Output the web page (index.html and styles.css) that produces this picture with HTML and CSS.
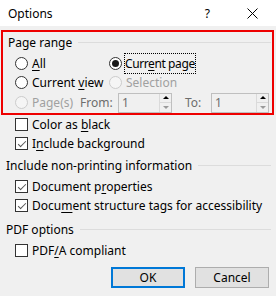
FILE: index.html
```html
<!DOCTYPE html>
<html lang="en">
<head>
    <meta charset="UTF-8">
    <title>Options</title>
    <link rel="stylesheet" href="styles.css">
</head>
<body>
    <div class="dialog">
        <div class="titlebar">
            <span class="title">Options</span>
            <span class="help">?</span>
            <svg class="close" width="11" height="11" viewBox="0 0 11 11">
                <path d="M0.5 0.5 L10.5 10.5 M10.5 0.5 L0.5 10.5" stroke="#000" stroke-width="1" fill="none"/>
            </svg>
        </div>

        <div class="page-range">
            <div class="legend"><span>Page range</span><span class="rule"></span></div>
            <div class="row">
                <div class="opt col1"><span class="radio"></span><span><u>A</u>ll</span></div>
                <div class="opt"><span class="radio on"></span><span class="focus">Curr<u>e</u>nt page</span></div>
            </div>
            <div class="row">
                <div class="opt col1"><span class="radio"></span><span>Current <u>v</u>iew</span></div>
                <div class="opt disabled"><span class="radio"></span><span>Selection</span></div>
            </div>
            <div class="row tall">
                <div class="opt disabled pages"><span class="radio"></span><span>Page(s)</span></div>
                <span class="lbl from">From:</span>
                <div class="spin from-box"><span class="val">1</span><span class="btns"><span class="up"></span><span class="down"></span></span></div>
                <span class="lbl to">To:</span>
                <div class="spin to-box"><span class="val">1</span><span class="btns"><span class="up"></span><span class="down"></span></span></div>
            </div>
        </div>

        <div class="row check-row"><span class="check"></span><span>Color as <u>b</u>lack</span></div>
        <div class="row check-row"><span class="check on"></span><span>I<u>n</u>clude background</span></div>

        <div class="legend section"><span>Include non-printing information</span><span class="rule"></span></div>
        <div class="row check-row after-head"><span class="check on"></span><span>Document p<u>r</u>operties</span></div>
        <div class="row check-row"><span class="check on"></span><span>Docu<u>m</u>ent structure tags for accessibility</span></div>

        <div class="legend section pdf"><span>PDF options</span><span class="rule"></span></div>
        <div class="row check-row after-head"><span class="check"></span><span>PDF<u>/</u>A compliant</span></div>

        <div class="buttons">
            <button class="btn default">OK</button>
            <button class="btn">Cancel</button>
        </div>
    </div>
</body>
</html>
```

FILE: styles.css
```css
html, body {
    margin: 0;
    padding: 0;
}
body {
    width: 276px;
    height: 296px;
    background: #f0f0f0;
    font-family: "Noto Sans", "Open Sans", sans-serif;
    font-size: 12px;
    color: #000;
    overflow: hidden;
}
u {
    text-decoration-thickness: 1px;
    text-underline-offset: 2px;
}
.titlebar {
    height: 26px;
    background: #fff;
    display: flex;
    align-items: center;
    padding-left: 8px;
    box-sizing: border-box;
}
.title {
    flex: 1;
}
.help {
    margin-right: 37px;
}
.close {
    margin-right: 18px;
}
.page-range {
    margin: 4px 2px 0 1px;
    border: 2px solid #ee0000;
    height: 85px;
    box-sizing: border-box;
    display: flex;
    flex-direction: column;
}
.legend {
    display: flex;
    align-items: center;
    height: 20px;
    padding-left: 5px;
    padding-right: 1px;
}
.legend .rule {
    flex: 1;
    height: 1px;
    background: #dcdcdc;
    margin-left: 6px;
}
.section {
    padding-left: 6px;
    padding-right: 5px;
    margin-top: 2px;
}
.section.pdf {
    margin-top: 4px;
}
.row {
    display: flex;
    align-items: center;
    height: 19px;
}
.row.tall {
    height: 21px;
}
.page-range .legend + .row {
    margin-top: 2px;
}
.opt {
    display: flex;
    align-items: center;
}
.col1 {
    width: 94px;
    padding-left: 12px;
}
.pages {
    width: 65px;
    padding-left: 12px;
}
.radio {
    width: 13px;
    height: 13px;
    border: 1px solid #333;
    border-radius: 50%;
    background: #fff;
    box-sizing: border-box;
    margin-right: 4px;
    display: flex;
    align-items: center;
    justify-content: center;
}
.radio.on::after {
    content: "";
    width: 7px;
    height: 7px;
    border-radius: 50%;
    background: #1a1a1a;
}
.focus {
    outline: 1px dotted #000;
    padding: 1px 0;
    margin-left: -1px;
    letter-spacing: -0.4px;
}
.disabled {
    color: #a0a0a0;
}
.disabled .radio {
    border-color: #cccccc;
    background: #f5f5f5;
}
.lbl {
    color: #6d6d6d;
}
.from {
    width: 38px;
    flex-shrink: 0;
}
.spin {
    height: 20px;
    border: 1px solid #bfbfbf;
    box-sizing: border-box;
    display: flex;
    align-items: stretch;
    background: #f0f0f0;
    flex-shrink: 0;
}
.from-box {
    width: 54px;
}
.to {
    width: 26px;
    margin-left: 13px;
    flex-shrink: 0;
}
.to-box {
    width: 58px;
}
.val {
    flex: 1;
    color: #6d6d6d;
    padding-left: 3px;
    line-height: 18px;
}
.btns {
    width: 11px;
    display: flex;
    flex-direction: column;
    border-left: 1px solid #dadada;
}
.btns span {
    flex: 1;
    display: flex;
    align-items: center;
    justify-content: center;
}
.btns .up {
    border-bottom: 1px solid #dadada;
}
.btns .up::after {
    content: "";
    border-left: 3px solid transparent;
    border-right: 3px solid transparent;
    border-bottom: 3px solid #000;
}
.btns .down::after {
    content: "";
    border-left: 3px solid transparent;
    border-right: 3px solid transparent;
    border-top: 3px solid #9a9a9a;
}
.check-row {
    padding-left: 15px;
}
.check-row.after-head {
    margin-top: 2px;
}
.check {
    width: 13px;
    height: 13px;
    border: 1px solid #333;
    background: #fff;
    box-sizing: border-box;
    margin-right: 4px;
    position: relative;
}
.check.on::after {
    content: "";
    position: absolute;
    left: 2px;
    top: 3px;
    width: 7px;
    height: 3px;
    border-left: 1px solid #555;
    border-bottom: 1px solid #555;
    transform: rotate(-45deg);
}
.buttons {
    display: flex;
    justify-content: flex-end;
    gap: 10px;
    padding-right: 7px;
    margin-top: 7px;
}
.btn {
    width: 74px;
    height: 21px;
    font-family: inherit;
    font-size: 12px;
    background: #e1e1e1;
    border: 1px solid #adadad;
    padding: 0;
    color: #000;
}
.btn.default {
    border: 2px solid #0078d7;
}
```
